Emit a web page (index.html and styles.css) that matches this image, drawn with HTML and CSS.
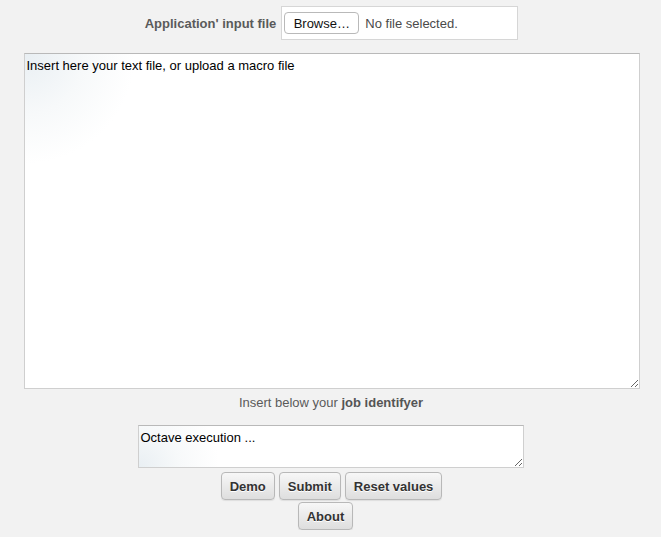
FILE: index.html
```html
<!DOCTYPE html>
<html>
<head>
<meta charset="utf-8">
<link rel="stylesheet" href="styles.css">
</head>
<body>
<div class="page">
  <div class="file-row">
    <span class="file-label">Application' input file</span>
    <div class="file-box">
      <span class="browse">Browse…</span>
      <span class="no-file">No file selected.</span>
    </div>
  </div>
  <textarea class="macro">Insert here your text file, or upload a macro file</textarea>
  <div class="job-label">Insert below your <b>job identifyer</b></div>
  <textarea class="job">Octave execution ...</textarea>
  <div class="buttons">
    <button class="btn">Demo</button>
    <button class="btn">Submit</button>
    <button class="btn">Reset values</button>
  </div>
  <div class="buttons buttons-2">
    <button class="btn">About</button>
  </div>
</div>
</body>
</html>
```
FILE: styles.css
```css
html, body {
  margin: 0;
  padding: 0;
  background: #f2f2f2;
}
body {
  font-family: "Liberation Sans", Arial, sans-serif;
  font-size: 13px;
  color: #555;
}
.page {
  display: flex;
  flex-direction: column;
  align-items: center;
  padding-top: 6px;
}
.file-row {
  display: flex;
  align-items: center;
  gap: 5px;
  margin-left: 2px;
}
.file-label {
  font-weight: bold;
  color: #5a5a5a;
  padding-top: 1px;
}
.file-box {
  box-sizing: border-box;
  width: 237px;
  height: 34px;
  background: #fff;
  border: 1px solid #d6d6d6;
  display: flex;
  align-items: center;
  padding-left: 2px;
  gap: 6px;
}
.browse {
  box-sizing: border-box;
  width: 75px;
  height: 22px;
  border: 1px solid #b9b9b9;
  border-radius: 4px;
  background: #fff;
  color: #111;
  display: flex;
  align-items: center;
  justify-content: center;
  font-size: 13px;
}
.no-file {
  color: #4a4a4a;
}
textarea {
  box-sizing: border-box;
  font-family: "Liberation Sans", Arial, sans-serif;
  font-size: 13px;
  color: #000;
  border: 1px solid #cfcfcf;
  border-top-color: #b9b9b9;
  background: radial-gradient(circle at 0 0, #e9eff3 0, #f7f9fa 60px, #fff 110px);
  padding: 4px 2px;
  margin: 0;
  outline: none;
}
.macro {
  width: 616px;
  height: 336px;
  margin-top: 13px;
  margin-left: 2px;
}
.job-label {
  margin-top: 6px;
  line-height: 15px;
  color: #5a5a5a;
  margin-left: 1px;
}
.job-label b {
  color: #555;
}
.job {
  width: 386px;
  height: 43px;
  margin-top: 15px;
  padding-top: 4px;
  background: radial-gradient(circle at 0 100%, #e9eff3 0, #f7f9fa 40px, #fff 80px);
}
.buttons {
  display: flex;
  gap: 4px;
  margin-top: 4px;
  margin-left: 2px;
}
.buttons-2 {
  margin-top: 2px;
  margin-left: 0;
  margin-right: 10px;
}
.btn {
  box-sizing: border-box;
  height: 28px;
  padding: 0 8px;
  font-family: "Liberation Sans", Arial, sans-serif;
  font-size: 13px;
  font-weight: bold;
  color: #333;
  text-shadow: 0 1px 0 #fff;
  background: linear-gradient(#f7f7f7, #dedede);
  border: 1px solid #b8b8b8;
  border-radius: 4px;
  box-shadow: 0 1px 1px rgba(0,0,0,0.08);
}
```
